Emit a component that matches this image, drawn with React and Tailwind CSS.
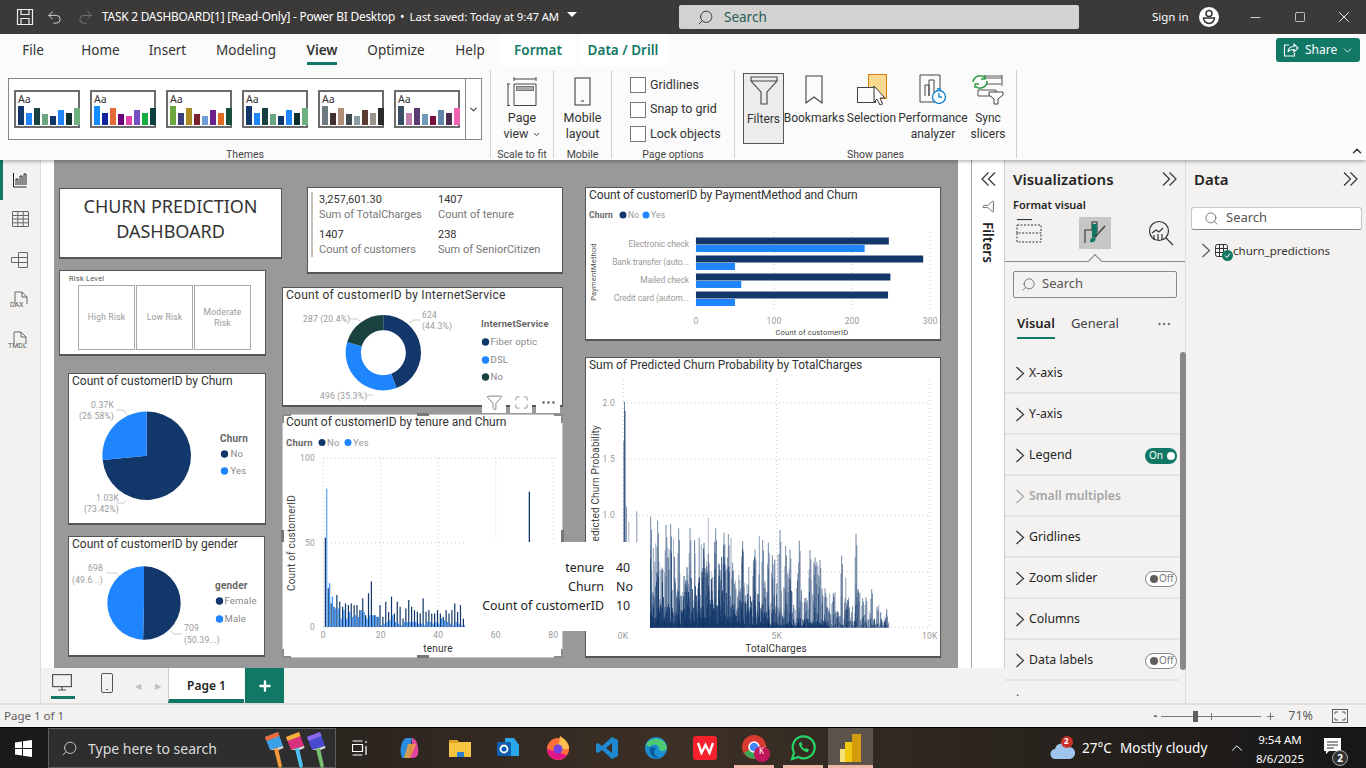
import { Search, ChevronDown, ChevronUp, Undo2, Redo2, Minus, Square, X, Filter, Maximize, MoreHorizontal, Plus } from 'lucide-react';

const ui = "font-['Noto_Sans',sans-serif]";
const din = "font-['Roboto',sans-serif]";

const DARK = '#12376a';
const BLUE = '#1f85ff';
const TEAL = '#1a4241';

const THEMES = [
    ['#12376a', '#1f85ff', '#1a4241', '#6aa67f', '#12376a', '#1f85ff', '#0f2f2f', '#6fb080'],
    ['#118dff', '#12239e', '#e66c37', '#6b007b', '#e044a7', '#744ec2', '#1aab40', '#0d3f3f'],
    ['#6da53f', '#3b3f7e', '#a98a23', '#7c1f2f', '#6ea0d6', '#6b1f8a', '#e06a1f', '#17503f'],
    ['#12376a', '#1f85ff', '#1a4241', '#6aa67f', '#12376a', '#1f85ff', '#0f2f2f', '#6fb080'],
    ['#6d7a80', '#40312e', '#b08d77', '#3f4a50', '#8a9da5', '#5a3a30', '#9b948c', '#2a2a2a'],
    ['#3a4f63', '#c27fae', '#5a3a72', '#6f9bb8', '#7a0f3f', '#5f86a8', '#4a2a4f', '#f062b0'],
];
const THEME_H = [19, 12, 17, 11, 9, 15, 12, 17];

const TABS = [
    ['File', 'w-[66px]'], ['Home', 'w-[69px]'], ['Insert', 'w-[65px]'], ['Modeling', 'w-[92px]'],
    ['View', 'w-[60px]'], ['Optimize', 'w-[88px]'], ['Help', 'w-[60px]'],
];

const PANE_ROWS = [
    { name: 'X-axis' }, { name: 'Y-axis' }, { name: 'Legend', toggle: 'on' }, { name: 'Small multiples', off: true },
    { name: 'Gridlines' }, { name: 'Zoom slider', toggle: 'off' }, { name: 'Columns' }, { name: 'Data labels', toggle: 'off' },
];

const TENURE_NO = [53, 23, 14, 12, 19, 15, 12, 14, 13, 14, 13, 13, 10, 17, 7, 20, 27, 7, 6, 13, 6, 15, 9, 18, 8, 15, 12, 5, 11, 16, 12, 10, 9, 8, 17, 9, 10, 8, 8, 10, 8, 6, 10, 8, 10, 14, 9, 13, 5, 3];
const TENURE_YES = [82, 26, 18, 11, 11, 5, 10, 5, 9, 6, 7, 6, 10, 9, 5, 7, 7, 7, 6, 1, 2, 3, 4, 7, 3, 2, 1, 3, 3, 3, 3, 3, 2, 2, 1, 3, 3, 2, 3, 2, 5, 4, 3, 2, 1, 3, 2, 1, 1, 2];

const PAY = [
    ['Electronic check', 247, 216], ['Bank transfer (auto...', 291, 50],
    ['Mailed check', 249, 58], ['Credit card (autom...', 246, 50],
];

// tops read off the reference, zoomed crop coordinates
const PEAKS = [[212, 380], [233, 392], [258, 405], [272, 402], [296, 415], [330, 415], [370, 475], [385, 492], [407, 415], [432, 428], [445, 432], [458, 518], [488, 453], [525, 478], [548, 450], [565, 458], [577, 495], [600, 420], [617, 468], [630, 478], [658, 452], [690, 480], [705, 502], [720, 510], [735, 595], [760, 610], [785, 497], [800, 640], [828, 432], [848, 625], [858, 622], [875, 597], [882, 690], [915, 690]];

function seeded(a) {
    return () => {
        a = (a + 0x6d2b79f5) | 0;
        let t = Math.imul(a ^ (a >>> 15), 1 | a);
        t = (t + Math.imul(t ^ (t >>> 7), 61 | t)) ^ t;
        return ((t ^ (t >>> 14)) >>> 0) / 4294967296;
    };
}

function makeSpikes() {
    const r = seeded(7);
    const out = [];
    let cluster = 1;
    for (let x = 626; x < 889; x += 0.35) {
        if (Math.floor(x) % 3 === 0) cluster = 0.45 + r() * 0.55;
        let env = x < 650 ? 110 : x < 760 ? 100 : x < 830 ? 72 : 50;
        if (x > 860) env = 22;
        out.push([x, 627 - Math.pow(r(), 2.1) * env * 1.15 * cluster, 0.3 + r() * 0.5]);
    }
    // dark mass near the baseline, thins out to the right
    for (let x = 650; x < 830; x += 0.5) {
        const env = x < 730 ? 70 : x < 770 ? 34 : 12;
        out.push([x, 627 - r() * r() * env, 0.9]);
    }
    PEAKS.forEach(([zx, zy]) => {
        const x = 580 + zx / 3;
        const top = 390 + zy / 3;
        out.push([x, top, 0.65], [x + 0.8, top + (627 - top) * 0.12, 0.6], [x - 0.8, top + (627 - top) * 0.25, 0.5]);
    });
    out.push([624.5, 402, 0.7], [625, 411, 0.95], [623.8, 441, 0.6]);
    return out;
}
const SPIKES = makeSpikes();

function slice(cx, cy, r0, r1, from, to) {
    const p = (r, a) => {
        const t = (a * Math.PI) / 180;
        return `${cx + r * Math.sin(t)} ${cy - r * Math.cos(t)}`;
    };
    const big = to - from > 180 ? 1 : 0;
    if (r0 === 0) return `M${cx} ${cy}L${p(r1, from)}A${r1} ${r1} 0 ${big} 1 ${p(r1, to)}Z`;
    return `M${p(r1, from)}A${r1} ${r1} 0 ${big} 1 ${p(r1, to)}L${p(r0, to)}A${r0} ${r0} 0 ${big} 0 ${p(r0, from)}Z`;
}

function Chev({ className = 'text-[#333]' }) {
    return (
        <svg width="10" height="15" viewBox="0 0 10 15" fill="none" stroke="currentColor" strokeWidth="1.2" className={className}>
            <path d="M1.500 1l7 6.500-7 6.500" />
        </svg>
    );
}

function DoubleChev({ left }) {
    return (
        <svg width="15" height="14" viewBox="0 0 15 14" fill="none" stroke="#333" strokeWidth="1.200" className={left ? '-scale-x-100' : ''}>
            <path d="M1 .500l6.500 6.500L1 13.500M7.500 .500L14 7l-6.500 6.500" />
        </svg>
    );
}

function Visual({ pos, title, children, extra = 'border border-[#555] border-b-2', track = '' }) {
    return (
        <div className={`absolute bg-white ${pos} ${extra}`}>
            {title && <div className={`absolute left-[3px] top-0 text-[12px] leading-[15px] text-[#333] whitespace-nowrap ${track} ${din}`}>{title}</div>}
            {children}
        </div>
    );
}

// viewBox is in screen pixels so the chart numbers can be read straight off the picture
function ChartSvg({ x, y, w, h, flush, children }) {
    return (
        <svg viewBox={`${x} ${y} ${w} ${h}`} width={w} height={h} className={flush ? 'absolute left-0 top-0' : 'absolute left-[-1px] top-[-1px]'}>
            {children}
        </svg>
    );
}

function ChartText({ x, y, children, anchor = 'start', size = 8.5, fill = '#999', weight = 400, rotate, ls = 0.2 }) {
    return (
        <text
            x={x}
            y={y}
            textAnchor={anchor}
            fontSize={size}
            fill={fill}
            fontWeight={weight}
            fontFamily="Roboto, sans-serif"
            letterSpacing={ls}
            transform={rotate ? `rotate(-90 ${x} ${y})` : undefined}
        >
            {children}
        </text>
    );
}

function Legend({ title, x, y, items, dx = 5, size = 10 }) {
    return (
        <g>
            <ChartText x={x} y={y + 3} size={size} weight={700} fill="#666">{title}</ChartText>
            {items.map(([name, color, iy]) => (
                <g key={name}>
                    <circle cx={x + 4.5} cy={iy} r="3.7" fill={color} />
                    <ChartText x={x + 4.5 + dx} y={iy + 3} size={9.5} fill="#888">{name}</ChartText>
                </g>
            ))}
        </g>
    );
}

function TitleBar() {
    return (
        <div className={`h-[34px] bg-[#3b3a39] flex items-center text-white shrink-0 ${ui}`}>
            <svg width="18" height="18" viewBox="0 0 18 18" fill="none" stroke="#eee" strokeWidth="1.2" className="ml-[16px]">
                <path d="M1.500 1.500h15v15h-15zM5 1.500v5h8v-5M5 16.500v-6h8v6" />
            </svg>
            <Undo2 size={17} strokeWidth={1.3} className="ml-[12px] text-[#ddd]" />
            <Redo2 size={17} strokeWidth={1.3} className="ml-[14px] text-[#777]" />
            <div className="ml-[8px] w-[465px] text-[11.9px] whitespace-nowrap">
                <span className="tracking-[-0.23px]">TASK 2 DASHBOARD[1] [Read-Only] - Power BI Desktop</span>
                <span className="mx-[5px]">•</span>
                <span className="text-[11.3px] tracking-[-0.09px]">Last saved: Today at 9:47 AM</span>
            </div>
            <div className="w-0 h-0 border-x-[5px] border-x-transparent border-t-[5px] border-t-white mb-[5px]" />
            <div className="ml-[102px] w-[400px] h-[24px] bg-[#d2d2d0] rounded-[2px] flex items-center pl-[18px] text-[13.5px] text-[#2a5a55]">
                <Search size={17} strokeWidth={1.3} className="text-[#333] -scale-x-100" />
                <span className="ml-[10px]">Search</span>
            </div>
            <span className="ml-[73px] w-[37px] text-[11.5px] whitespace-nowrap">Sign in</span>
            <svg width="20" height="20" viewBox="0 0 20 20" className="ml-[10px]">
                <circle cx="10" cy="10" r="10" fill="#fff" />
                <circle cx="10" cy="6.500" r="3" fill="none" stroke="#333" strokeWidth="1.500" />
                <path d="M4.500 11h11a5.500 5.500 0 0 1-11 0z" fill="none" stroke="#333" strokeWidth="1.500" />
            </svg>
            <Minus size={15} strokeWidth={1.2} className="ml-[29px]" />
            <Square size={12} strokeWidth={1.3} className="ml-[31px]" />
            <X size={18} strokeWidth={1.2} className="ml-[29px]" />
        </div>
    );
}

function ThemeThumb({ colors }) {
    return (
        <div className="w-[66px] h-[38px] border-2 border-[#6b6b6b] bg-white relative shrink-0">
            <span className={`absolute left-[2px] top-[0px] text-[10.5px] leading-[14px] text-[#333] ${ui}`}>Aa</span>
            <div className="absolute left-[2px] bottom-[1px] flex items-end gap-[2px]">
                {colors.map((c, i) => (
                    <div key={i} className="w-[6px]" style={{ background: c, height: THEME_H[i] }} />
                ))}
            </div>
        </div>
    );
}

function RibbonGroup({ width, label, children }) {
    return (
        <div className={`${width} h-[88px] mt-[2px] border-r border-[#d0d0d0] flex flex-col shrink-0`}>
            <div className="h-[78px] flex shrink-0">{children}</div>
            <div className={`text-center text-[10.5px] leading-[14px] text-[#444] ${din}`}>{label}</div>
        </div>
    );
}

function PaneBtn({ width, lines, children, active }) {
    return (
        <div className={`${width} h-[71px] mt-[3px] flex flex-col items-center shrink-0 ${active ? 'bg-[#ececec] border border-[#555]' : ''}`}>
            <div className="h-[31px] mt-[1px] flex items-center justify-center">{children}</div>
            <div className={`text-[12px] leading-[16px] text-[#333] text-center mt-[5px] whitespace-nowrap ${din}`}>
                {lines.map((l) => <div key={l}>{l}</div>)}
            </div>
        </div>
    );
}

function CheckRow({ label }) {
    return (
        <div className="flex items-center h-[24.5px]">
            <div className="w-[16px] h-[16px] border border-[#777] bg-white" />
            <span className={`ml-[4px] text-[12.5px] text-[#333] ${din}`}>{label}</span>
        </div>
    );
}

function Ribbon() {
    return (
        <div className={`h-[126px] bg-[#fbfbfb] shrink-0 relative shadow-[0_2px_3px_rgba(0,0,0,0.25)] z-10 ${ui}`}>
            <div className="h-[34px] flex items-stretch text-[13.5px] text-[#333] relative">
                {TABS.map(([t, w]) => (
                    <div key={t} className={`${w} relative flex items-center justify-center pb-[2px] ${t === 'View' ? 'font-semibold' : ''}`}>
                        {t}
                        {t === 'View' && <div className="absolute bottom-[3px] left-[15px] w-[30px] h-[3px] bg-[#117865]" />}
                    </div>
                ))}
                <div className="w-[76px] h-[32px] bg-white flex items-center justify-center text-[#117865] font-semibold">Format</div>
                <div className="ml-[3px] w-[88px] h-[32px] bg-white flex items-center justify-center text-[#117865] font-semibold">Data / Drill</div>
                <div className="absolute left-[1276px] top-[4px] w-[84px] h-[24px] bg-[#117865] rounded-[3px] flex items-center text-white text-[12px] pl-[7px]">
                    <svg width="16" height="16" viewBox="0 0 16 16" fill="none" stroke="#fff" strokeWidth="1.100">
                        <path d="M6 3H1.500v11h10v-3M5 10c0-4 3-5.500 6-5.500V2l4 4-4 4V7.500C8 7.500 6 8 5 10z" />
                    </svg>
                    <span className="ml-[6px]">Share</span>
                    <ChevronDown size={13} strokeWidth={1.500} className="ml-[4px]" />
                </div>
            </div>
            <div className="flex h-[92px]">
                <RibbonGroup width="w-[491px]" label="Themes">
                    <div className="ml-[8px] mt-[8px] w-[474px] h-[62px] border border-[#888] flex bg-white">
                        <div className="flex-1 flex gap-[10px] pl-[5px] pt-[11px]">
                            {THEMES.map((c, i) => <ThemeThumb key={i} colors={c} />)}
                        </div>
                        <div className="w-[16px] border-l border-[#888] flex items-center justify-center">
                            <ChevronDown size={11} strokeWidth={2.500} className="text-[#444]" />
                        </div>
                    </div>
                </RibbonGroup>
                <RibbonGroup width="w-[63px]" label="Scale to fit">
                    <div className="w-full flex flex-col items-center">
                        <svg width="30" height="30" viewBox="0 0 30 30" fill="none" stroke="#444" strokeWidth="1" className="mt-[6px]">
                            <path d="M7 1v4M29 1v4M7 3h22M1 8v22M0 8h3M0 29.500h3M7 8h22v21.500H7z" />
                            <rect x="9.500" y="10.500" width="17" height="4" fill="#aaa" stroke="#777" />
                        </svg>
                        <div className={`text-[12.5px] leading-[16px] text-[#333] text-center mt-[4px] ${din}`}>
                            Page<br />view <ChevronDown size={9} strokeWidth={2.500} className="inline -mt-[1px]" />
                        </div>
                    </div>
                </RibbonGroup>
                <RibbonGroup width="w-[58px]" label="Mobile">
                    <div className="w-full flex flex-col items-center">
                        <svg width="18" height="29" viewBox="0 0 18 29" fill="none" stroke="#444" strokeWidth="1.100" className="mt-[7px]">
                            <rect x="1" y="1" width="15" height="27" />
                            <path d="M7 24h3" />
                        </svg>
                        <div className={`text-[12.5px] leading-[16px] text-[#333] text-center mt-[4px] ${din}`}>Mobile<br />layout</div>
                    </div>
                </RibbonGroup>
                <RibbonGroup width="w-[123px]" label="Page options">
                    <div className="ml-[18px] mt-[3px]">
                        <CheckRow label="Gridlines" />
                        <CheckRow label="Snap to grid" />
                        <CheckRow label="Lock objects" />
                    </div>
                </RibbonGroup>
                <RibbonGroup width="w-[282px]" label="Show panes">
                    <div className="flex pl-[8px]">
                        <PaneBtn width="w-[41px]" lines={['Filters']} active>
                            <svg width="28" height="29" viewBox="0 0 28 29" fill="none" stroke="#444" strokeWidth="1.100">
                                <path d="M1 1h26v4L17 16v12h-6V16L1 5zM1 5h26" />
                            </svg>
                        </PaneBtn>
                        <PaneBtn width="w-[60px]" lines={['Bookmarks']}>
                            <svg width="18" height="29" viewBox="0 0 18 29" fill="none" stroke="#444" strokeWidth="1.100">
                                <path d="M1 1h16v27l-8-6-8 6z" />
                            </svg>
                        </PaneBtn>
                        <PaneBtn width="w-[55px]" lines={['Selection']}>
                            <svg width="30" height="31" viewBox="0 0 30 31" fill="none">
                                <rect x="11.500" y="0.500" width="18" height="24" fill="#fbd98e" stroke="#d97c10" />
                                <rect x="0.500" y="13.500" width="18" height="15" fill="#fbfbfb" stroke="#444" />
                                <path d="M17 12l11 12h-5l2.500 6-2.500 1-3-6-3 3z" fill="#fff" stroke="#333" />
                            </svg>
                        </PaneBtn>
                        <PaneBtn width="w-[68px]" lines={['Performance', 'analyzer']}>
                            <svg width="28" height="31" viewBox="0 0 28 31" fill="none" stroke="#444" strokeWidth="1">
                                <path d="M1 1h20v27H1zM6 22V11h4v11M10 22V6h5v16" />
                                <circle cx="20" cy="23" r="6.500" fill="#fff" stroke="#1a86d0" strokeWidth="1.400" />
                                <path d="M20 19v4h3M18 14.800h4" stroke="#1a86d0" strokeWidth="1.400" />
                            </svg>
                        </PaneBtn>
                        <PaneBtn width="w-[42px]" lines={['Sync', 'slicers']}>
                            <svg width="32" height="31" viewBox="0 0 32 31" fill="none">
                                <rect x="12" y="1" width="18" height="4" fill="#aaa" />
                                <path d="M30 1v11M14 10h15M6 16h18v6H6z" stroke="#555" />
                                <path d="M1 8a7 7 0 0 1 12-4M15 7a7 7 0 0 1-12 5" stroke="#2e9b47" strokeWidth="1.600" />
                                <path d="M13 1v4h-4M3 14v-4h4" stroke="#2e9b47" strokeWidth="1.300" />
                                <path d="M17 18h14v3l-5 4v5h-4v-5l-5-4z" fill="#fff" stroke="#444" />
                            </svg>
                        </PaneBtn>
                    </div>
                </RibbonGroup>
                <ChevronUp size={14} strokeWidth={2.500} className="absolute right-[2px] bottom-[2px] text-[#333]" />
            </div>
        </div>
    );
}

function Rail() {
    return (
        <div className="w-[41px] bg-[#f3f2f1] border-r border-[#ddd] relative flex flex-col items-center pt-[12px] shrink-0">
            <div className="absolute left-0 top-0 w-[3px] h-[40px] bg-[#117865]" />
            <svg width="14" height="16" viewBox="0 0 14 16" fill="none" stroke="#222">
                <path d="M.5 1v14h13M3 13V7h2v6M7 13V4h2v9M11 13V2h2v11" />
            </svg>
            <svg width="17" height="16" viewBox="0 0 17 16" fill="none" stroke="#666" className="mt-[23px]">
                <path d="M.5.500h16v15H.500zM.5 4.500h16M.5 8h16M.5 11.800h16M5.800.5v15M11.200.5v15" />
            </svg>
            <svg width="18" height="18" viewBox="0 0 18 18" fill="none" stroke="#666" className="mt-[24px]">
                <path d="M7.500 1.500h9v5h-9zM.5 6.500h7v5h-7zM7.500 11.500h9v5h-9zM7.500 6.500h9v5h-9" />
            </svg>
            <div className="relative w-[20px] h-[22px] mt-[22px]">
                <svg width="14" height="14" viewBox="0 0 14 14" fill="none" stroke="#666" className="absolute left-[4px] top-0">
                    <path d="M1 13V1h7l5 5v7M8 1v5h5" />
                </svg>
                <span className={`absolute left-[0px] top-[10px] text-[7px] leading-[9px] text-[#555] ${din}`}>DAX</span>
            </div>
            <div className="relative w-[20px] h-[22px] mt-[18px]">
                <svg width="14" height="14" viewBox="0 0 14 14" fill="none" stroke="#666" className="absolute left-[3px] top-0">
                    <path d="M1 13V1h7l5 5v7M8 1v5h5" />
                </svg>
                <span className={`absolute left-[-2px] top-[11px] text-[7px] leading-[9px] text-[#555] ${din}`}>TMDL</span>
            </div>
        </div>
    );
}

function ChurnPie() {
    const cx = 146.7, cy = 455.7, r = 44.3;
    const a = 360 - 26.58 * 3.6;
    return (
        <ChartSvg x={68} y={373} w={198} h={152}>
            <path d={slice(cx, cy, 0, r, 0, a)} fill={DARK} />
            <path d={slice(cx, cy, 0, r, a, 360)} fill={BLUE} />
            <ChartText x={114} y={408} anchor="end">0.37K</ChartText>
            <ChartText x={114} y={419} anchor="end">(26.58%)</ChartText>
            <path d="M116 410h8l3 5M116 503h8l3-3" fill="none" stroke="#ccc" />
            <ChartText x={119} y={501} anchor="end">1.03K</ChartText>
            <ChartText x={119} y={512} anchor="end">(73.42%)</ChartText>
            <Legend title="Churn" x={220} y={439} items={[['No', DARK, 454], ['Yes', BLUE, 471]]} dx={6} />
        </ChartSvg>
    );
}

function GenderPie() {
    const cx = 144, cy = 603, r = 36.7;
    return (
        <ChartSvg x={68} y={536} w={197} h={121}>
            <path d={slice(cx, cy, 0, r, 0, 181.4)} fill={DARK} />
            <path d={slice(cx, cy, 0, r, 181.4, 360)} fill={BLUE} />
            <ChartText x={103} y={571} anchor="end">698</ChartText>
            <ChartText x={103} y={583} anchor="end">(49.6...)</ChartText>
            <path d="M106 573h10l3 3M171 631l3 3h8" fill="none" stroke="#ccc" />
            <ChartText x={184} y={631}>709</ChartText>
            <ChartText x={184} y={643}>(50.39...)</ChartText>
            <Legend title="gender" x={215} y={586} items={[['Female', DARK, 601], ['Male', BLUE, 619]]} />
        </ChartSvg>
    );
}

function Donut() {
    const cx = 383.3, cy = 352.7;
    const a = 44.3 * 3.6, b = a + 35.3 * 3.6;
    return (
        <ChartSvg x={282} y={287} w={281} h={120}>
            <path d={slice(cx, cy, 22.5, 37.7, 0, a)} fill={DARK} />
            <path d={slice(cx, cy, 22.5, 37.7, a, b)} fill={BLUE} />
            <path d={slice(cx, cy, 22.5, 37.7, b, 360)} fill={TEAL} />
            <ChartText x={303} y={322}>287 (20.4%)</ChartText>
            <ChartText x={422} y={318}>624</ChartText>
            <ChartText x={422} y={329}>(44.3%)</ChartText>
            <ChartText x={320} y={399}>496 (35.3%)</ChartText>
            <path d="M349 319h8l4 3M420 320h-6l-5 3M365 395h8" fill="none" stroke="#ccc" />
            <Legend title="InternetService" x={481} y={324} size={9.4} items={[['Fiber optic', DARK, 342], ['DSL', BLUE, 360], ['No', TEAL, 377]]} />
        </ChartSvg>
    );
}

function PaymentChart() {
    const x0 = 696, k = 0.7807;
    return (
        <ChartSvg x={585} y={187} w={356} h={154}>
            {[0, 100, 200, 300].map((v) => (
                <g key={v}>
                    <line x1={x0 + v * k} x2={x0 + v * k} y1="232" y2="312" stroke="#ccc" strokeDasharray="1 3" />
                    <ChartText x={x0 + v * k} y={324} anchor="middle">{v}</ChartText>
                </g>
            ))}
            {PAY.map(([name, no, yes], i) => (
                <g key={name}>
                    <rect x={x0} y={237.5 + i * 18} width={no * k} height="7" fill={DARK} />
                    <rect x={x0} y={245 + i * 18} width={yes * k} height="7" fill={BLUE} />
                    <ChartText x={689} y={247 + i * 18} anchor="end" ls={-0.1}>{name}</ChartText>
                </g>
            ))}
            <ChartText x={596} y={272} anchor="middle" size={7.5} fill="#555" rotate>PaymentMethod</ChartText>
            <ChartText x={812} y={335} anchor="middle" size={7.5} fill="#444">Count of customerID</ChartText>
            <ChartText x={589} y={218} size={8.5} weight={700} fill="#666">Churn</ChartText>
            <circle cx="623" cy="215" r="3.500" fill={DARK} />
            <ChartText x={628} y={218} size={8.500}>No</ChartText>
            <circle cx="646" cy="215" r="3.500" fill={BLUE} />
            <ChartText x={651} y={218} size={8.500}>Yes</ChartText>
        </ChartSvg>
    );
}

function TenureChart() {
    const x0 = 323.3, k = 2.875, y0 = 627, h = 1.687;
    return (
        <ChartSvg x={283} y={415} w={279} h={242} flush>
            {[0, 20, 40, 60, 80].map((v) => (
                <g key={v}>
                    <line x1={x0 + v * k} x2={x0 + v * k} y1="458" y2="627" stroke="#ccc" strokeDasharray="1 3" />
                    <ChartText x={x0 + v * k} y={638} anchor="middle">{v}</ChartText>
                </g>
            ))}
            {[[100, 458.3], [50, 542.7], [0, 627]].map(([v, y]) => (
                <g key={v}>
                    <line x1="323" x2="556" y1={y} y2={y} stroke="#ccc" strokeDasharray="1 3" />
                    <ChartText x={315} y={y + 3} anchor="end">{v}</ChartText>
                </g>
            ))}
            {TENURE_NO.map((v, i) => <rect key={i} x={x0 + (i + 1) * k - 1.4} y={y0 - v * h} width="1.2" height={v * h} fill={DARK} />)}
            {TENURE_YES.map((v, i) => <rect key={i} x={x0 + (i + 1) * k - 0.2} y={y0 - v * h} width="1.4" height={v * h} fill={BLUE} fillOpacity={i === 0 ? 0.65 : 0.85} />)}
            <rect x="528.700" y="491.700" width="1.300" height="52" fill={DARK} />
            <ChartText x={295} y={543} anchor="middle" size={10} fill="#444" rotate>Count of customerID</ChartText>
            <ChartText x={438} y={652} anchor="middle" size={10} fill="#333">tenure</ChartText>
            <ChartText x={286} y={446} size={9.5} weight={700} fill="#666">Churn</ChartText>
            <circle cx="322" cy="442.500" r="3.500" fill={DARK} />
            <ChartText x={327} y={446} size={9.500}>No</ChartText>
            <circle cx="348" cy="442.500" r="3.500" fill={BLUE} />
            <ChartText x={353} y={446} size={9.500}>Yes</ChartText>
        </ChartSvg>
    );
}

function SumChart() {
    return (
        <ChartSvg x={585} y={357} w={356} h={301}>
            {[623.3, 776.7, 929.7].map((x) => <line key={x} x1={x} x2={x} y1="380" y2="628" stroke="#ccc" strokeDasharray="1 3" />)}
            {[['2.0', 402.7], ['1.5', 459], ['1.0', 515.3], ['0.5', 571.7], ['', 627.3]].map(([t, y]) => (
                <g key={y}>
                    <line x1="623" x2="930" y1={y} y2={y} stroke="#ccc" strokeDasharray="1 3" />
                    <ChartText x={615} y={y + 3} anchor="end">{t}</ChartText>
                </g>
            ))}
            {SPIKES.map(([x, top, o], i) => <line key={i} x1={x} x2={x} y1={top} y2="627.500" stroke={DARK} strokeOpacity={o} strokeWidth="0.9" />)}
            <ChartText x={623} y={639} anchor="middle">0K</ChartText>
            <ChartText x={776.700} y={639} anchor="middle">5K</ChartText>
            <ChartText x={929.700} y={639} anchor="middle">10K</ChartText>
            <ChartText x={599} y={425} anchor="end" size={10} fill="#444" rotate>Sum of Predicted Churn Probability</ChartText>
            <ChartText x={776} y={652} anchor="middle" size={10} fill="#333">TotalCharges</ChartText>
        </ChartSvg>
    );
}

function Stat({ value, label }) {
    return (
        <div>
            <div className="text-[11px] leading-[15px] text-[#333]">{value}</div>
            <div className="text-[11px] leading-[15px] text-[#777] whitespace-nowrap">{label}</div>
        </div>
    );
}

function RiskBtn({ children }) {
    return <div className={`w-[57px] h-[65px] border border-[#aaa] flex items-center justify-center text-center text-[8.5px] leading-[11px] text-[#999] tracking-[0.2px] ${din}`}>{children}</div>;
}

function Corner({ className }) {
    return <div className={`absolute w-[9px] h-[9px] border-[#8c8c8c] z-20 ${className}`} />;
}

function Canvas() {
    return (
        <div className="w-[904px] h-full bg-[#999999] relative overflow-hidden shrink-0">
            <Visual pos="left-[5px] top-[28px] w-[223px] h-[71px]">
                <div className={`h-full flex items-center justify-center text-center text-[18px] leading-[25px] pb-[8px] text-[#333] ${ui}`}>CHURN PREDICTION<br />DASHBOARD</div>
            </Visual>
            <Visual pos="left-[5px] top-[110px] w-[207px] h-[86px]">
                <div className={`absolute left-[9px] top-[3px] text-[7.5px] leading-[10px] text-[#555] tracking-[0.2px] ${din}`}>Risk Level</div>
                <div className="absolute left-[18px] top-[14px] flex gap-[1px]">
                    <RiskBtn>High Risk</RiskBtn>
                    <RiskBtn>Low Risk</RiskBtn>
                    <RiskBtn>Moderate<br />Risk</RiskBtn>
                </div>
            </Visual>
            <Visual pos="left-[14px] top-[213px] w-[198px] h-[152px]" title="Count of customerID by Churn"><ChurnPie /></Visual>
            <Visual pos="left-[14px] top-[376px] w-[197px] h-[121px]" title="Count of customerID by gender"><GenderPie /></Visual>
            <Visual pos="left-[253px] top-[27px] w-[256px] h-[87px]">
                <div className="absolute left-[3px] top-[4px] w-[2px] h-[65px] bg-[#c8c1b8]" />
                <div className={`absolute left-[11px] top-[4px] grid grid-cols-[119px_119px] gap-y-[5px] ${din}`}>
                    <Stat value="3,257,601.30" label="Sum of TotalCharges" />
                    <Stat value="1407" label="Count of tenure" />
                    <Stat value="1407" label="Count of customers" />
                    <Stat value="238" label="Sum of SeniorCitizen" />
                </div>
            </Visual>
            <Visual pos="left-[228px] top-[127px] w-[281px] h-[120px]" title="Count of customerID by InternetService" track="tracking-[0.28px]"><Donut /></Visual>
            <Visual pos="left-[531px] top-[27px] w-[356px] h-[154px]" title="Count of customerID by PaymentMethod and Churn" track="tracking-[-0.13px]"><PaymentChart /></Visual>
            <Visual pos="left-[531px] top-[197px] w-[356px] h-[301px]" title="Sum of Predicted Churn Probability by TotalCharges" track="tracking-[-0.05px]"><SumChart /></Visual>

            <div className="absolute left-[228px] top-[254px] w-[281px] h-[244px] bg-[#c4c4c4] z-10" />
            <Visual pos="left-[229px] top-[255px] w-[279px] h-[242px] z-10" extra="" title="Count of customerID by tenure and Churn"><TenureChart /></Visual>
            <Corner className="left-[228px] top-[254px] border-l-2 border-t-2" />
            <Corner className="left-[500px] top-[254px] border-r-2 border-t-2" />
            <Corner className="left-[228px] top-[489px] border-l-2 border-b-2" />
            <Corner className="left-[500px] top-[489px] border-r-2 border-b-2" />
            <div className="absolute left-[363px] top-[253px] w-[12px] h-[3px] bg-[#777] z-20" />
            <div className="absolute left-[363px] top-[495px] w-[12px] h-[3px] bg-[#777] z-20" />
            <div className="absolute left-[227px] top-[370px] w-[3px] h-[12px] bg-[#777] z-20" />
            <div className="absolute left-[507px] top-[370px] w-[3px] h-[12px] bg-[#777] z-20" />

            <div className="absolute left-[428px] top-[232px] flex gap-[4px] z-20 text-[#555]">
                <div className="w-[24px] h-[21px] bg-white flex items-center justify-center"><Filter size={17} strokeWidth={1} /></div>
                <div className="w-[22px] h-[21px] bg-white flex items-center justify-center"><Maximize size={15} strokeWidth={1} /></div>
                <div className="w-[24px] h-[21px] bg-white flex items-center justify-center"><MoreHorizontal size={17} strokeWidth={1.500} /></div>
            </div>

            <div className={`absolute left-[411px] top-[382px] w-[185px] h-[89px] bg-white z-30 pl-[17px] pt-[16px] text-[12.4px] leading-[19px] text-[#222] grid grid-cols-[122px_1fr] gap-x-[12px] content-start ${ui}`}>
                <span className="text-right">tenure</span><span>40</span>
                <span className="text-right">Churn</span><span>No</span>
                <span className="text-right whitespace-nowrap">Count of customerID</span><span>10</span>
            </div>
        </div>
    );
}

function FiltersPane() {
    return (
        <div className="w-[33px] bg-white border-r border-[#ccc] flex flex-col items-center shrink-0">
            <div className="mt-[12px]"><DoubleChev left /></div>
            <Filter size={13} strokeWidth={1.300} className="mt-[14px] text-[#333] rotate-90" />
            <div className="mt-[9px] text-[13.5px] font-semibold text-[#222] [writing-mode:vertical-rl]">Filters</div>
        </div>
    );
}

function Toggle({ on }) {
    if (on) {
        return (
            <div className="w-[32px] h-[16px] rounded-full bg-[#117865] flex items-center justify-between pl-[4px] pr-[2px] text-[10px] text-white">
                On<div className="w-[8px] h-[8px] rounded-full bg-white" />
            </div>
        );
    }
    return (
        <div className="w-[32px] h-[16px] rounded-full border border-[#888] bg-white flex items-center pl-[4px] text-[10px] text-[#777]">
            <div className="w-[8px] h-[8px] rounded-full bg-[#605e5c] mr-[1px]" />Off
        </div>
    );
}

function VizPane() {
    return (
        <div className="w-[181px] h-full bg-[#f3f2f1] border-r border-[#ddd] relative shrink-0">
            <div className="flex items-center justify-between pl-[8px] pr-[8px] pt-[8px]">
                <span className="text-[15px] font-semibold text-[#252423]">Visualizations</span>
                <DoubleChev />
            </div>
            <div className="pl-[8px] mt-[6px] text-[11px] leading-[16px] font-semibold text-[#252423]">Format visual</div>
            <div className="h-[45px] mt-[4px] flex border-b border-[#8a8886] relative">
                <svg width="26" height="25" viewBox="0 0 26 25" fill="none" stroke="#333" className="ml-[11px] mt-[2px]">
                    <path d="M1 .500h15" strokeWidth="1.200" />
                    <path d="M1 6h24v8H1zM1 14v9h24v-9" strokeDasharray="2 1.500" />
                </svg>
                <div className="absolute left-[74px] top-0 w-[32px] h-[32px] bg-[#c8c6c4] flex items-center justify-center">
                    <svg width="24" height="24" viewBox="0 0 24 24" fill="none">
                        <path d="M2 22V9h7V1h5v10" stroke="#333" strokeWidth="1.100" />
                        <rect x="9" y="3" width="5" height="13" fill="#117865" />
                        <path d="M22 5L11 17" stroke="#444" strokeWidth="1.600" />
                        <path d="M7 21c0-4 3-6 5-4s-1 5-5 4z" fill="#117865" />
                    </svg>
                </div>
                <svg width="26" height="26" viewBox="0 0 26 26" fill="none" stroke="#333" strokeWidth="1.200" className="absolute left-[143px] top-[3px]">
                    <circle cx="11" cy="11" r="9.500" />
                    <path d="M18 18l7 7M4 13l4-3 3 2 4-4M6 20v-5M10 20v-6M14 20v-6" />
                </svg>
                <div className="absolute left-[85px] top-[39px] w-[10px] h-[10px] rotate-45 bg-[#f3f2f1] border-l border-t border-[#8a8886]" />
            </div>
            <div className="ml-[8px] mt-[9px] w-[164px] h-[27px] border border-[#8a8886] rounded-[2px] flex items-center pl-[7px] text-[13px] text-[#555]">
                <Search size={15} strokeWidth={1.200} className="-scale-x-100" />
                <span className="ml-[6px]">Search</span>
            </div>
            <div className="h-[24px] mt-[16px] ml-[12px] flex text-[13px] text-[#444] relative">
                <span className="font-semibold text-[#252423]">Visual</span>
                <span className="ml-[16px]">General</span>
                <MoreHorizontal size={16} strokeWidth={1.300} className="ml-[37px] mt-[2px]" />
                <div className="absolute left-0 top-[23px] w-[38px] h-[2px] bg-[#117865]" />
            </div>
            <div className="absolute left-[0px] top-[193px] w-[174px]">
                {PANE_ROWS.map((r) => (
                    <div key={r.name} className={`h-[41px] border-b-2 border-[#e6e4e2] flex items-center pl-[10px] pt-[2px] text-[12.3px] ${r.off ? 'text-[#a6a6a6] font-semibold' : 'text-[#252423]'}`}>
                        <Chev className={r.off ? 'text-[#a6a6a6]' : 'text-[#333]'} />
                        <span className="ml-[4px]">{r.name}</span>
                        {r.toggle && <div className="ml-auto mr-[2px]"><Toggle on={r.toggle === 'on'} /></div>}
                    </div>
                ))}
                <div className="pl-[11px] text-[12px] text-[#555] leading-[18px] mt-[2px]">.</div>
            </div>
            <div className="absolute left-[175px] top-[192px] w-[6px] h-[318px] rounded-full bg-[#8a8886]" />
        </div>
    );
}

function DataPane() {
    return (
        <div className="flex-1 h-full bg-[#f3f2f1] relative">
            <div className="flex items-center justify-between pl-[8px] pr-[8px] pt-[8px]">
                <span className="text-[15px] font-semibold text-[#252423]">Data</span>
                <DoubleChev />
            </div>
            <div className="ml-[5px] mt-[16px] w-[171px] h-[23px] bg-white border border-[#c8c6c4] border-b-[#8a8886] rounded-[3px] flex items-center pl-[12px] text-[13px] text-[#555]">
                <Search size={15} strokeWidth={1.200} />
                <span className="ml-[7px]">Search</span>
            </div>
            <div className="flex items-center mt-[12px] ml-[15px] relative">
                <Chev className="text-[#555] mr-[3px]" />
                <svg width="13" height="13" viewBox="0 0 13 13" fill="none" stroke="#333" className="ml-[1px]">
                    <rect x="0.500" y="0.500" width="12" height="12" rx="2" />
                    <path d="M.5 4.500h12M.5 8.500h12M4.500.5v12M8.500.5v12" />
                </svg>
                <span className="ml-[5px] text-[11.5px] text-[#333]">churn_predictions</span>
                <div className="absolute left-[21px] top-[8px] w-[11px] h-[11px] rounded-full bg-[#117865] flex items-center justify-center">
                    <svg width="7" height="7" viewBox="0 0 7 7" fill="none" stroke="#fff"><path d="M1 3.500l2 2 3-4" /></svg>
                </div>
            </div>
        </div>
    );
}

function TabStrip() {
    return (
        <div className={`h-[35px] bg-[#f3f2f1] flex shrink-0 ${ui}`}>
            <div className="w-[41px] border-r border-[#ddd]" />
            <div className="w-[34px] relative flex justify-center pt-[6px] ml-[4px]">
                <svg width="20" height="17" viewBox="0 0 20 17" fill="none" stroke="#555" strokeWidth="1.200">
                    <rect x="0.600" y="0.600" width="18.800" height="12" /><path d="M10 13v3M6 16h8" />
                </svg>
                <div className="absolute left-[6px] bottom-[4px] w-[24px] h-[3px] bg-[#117865]" />
            </div>
            <div className="w-[42px] flex justify-center pt-[5px] ml-[7px]">
                <svg width="12" height="20" viewBox="0 0 12 20" fill="none" stroke="#555"><rect x="0.500" y="0.500" width="11" height="19" rx="1.500" /><path d="M5 16.500h2" /></svg>
            </div>
            <div className="w-[40px] flex justify-center items-center gap-[14px] text-[#c0c0c0] text-[8px]">
                <span>◀</span><span>▶</span>
            </div>
            <div className="w-[76px] bg-white border-l border-[#ccc] border-b-[4px] border-b-[#117865] flex items-center justify-center pt-[5px] text-[12px] font-semibold text-[#252423]">Page 1</div>
            <div className="w-[39px] ml-[1px] bg-[#117865] flex items-center justify-center text-white"><Plus size={16} strokeWidth={3.500} /></div>
        </div>
    );
}

function StatusBar() {
    return (
        <div className={`h-[24px] bg-[#f3f2f1] border-t-2 border-[#e1dfdd] flex items-center text-[11.5px] text-[#605e5c] shrink-0 relative ${ui}`}>
            <span className="ml-[4px]">Page 1 of 1</span>
            <span className="ml-auto mr-[4px] font-bold">-</span>
            <div className="w-[100px] h-[1px] bg-[#777] relative">
                <div className="absolute left-[32px] top-[-5px] w-[5px] h-[11px] bg-[#605e5c]" />
                <div className="absolute left-[50px] top-[-3px] w-[1px] h-[7px] bg-[#777]" />
            </div>
            <Plus size={11} strokeWidth={1.800} className="ml-[4px]" />
            <span className="ml-[12px] text-[12.5px]">71%</span>
            <svg width="16" height="14" viewBox="0 0 16 14" fill="none" stroke="#605e5c" className="ml-[19px] mr-[18px]">
                <rect x="0.500" y="0.500" width="15" height="13" />
                <path d="M3 5V3h3M10 3h3v2M13 9v2h-3M6 11H3V9" />
            </svg>
        </div>
    );
}

function Brush({ top, head, handle }) {
    return (
        <svg width="21" height="39" viewBox="0 0 21 39">
            <path d="M1 7L14 2l5 14-13 4z" fill={head} />
            <path d="M1 7L14 2l1.500 4L2.500 11z" fill={top} />
            <path d="M6 20l13-4 0.500 2-5 2z" fill="#ddd" />
            <path d="M10 19l4-1 4 18-1.500 2-2-1z" fill={handle} />
        </svg>
    );
}

function Taskbar() {
    return (
        <div className={`h-[41px] bg-linear-to-r from-[#191919] via-[#3d3025] to-[#171717] border-t border-black flex items-center text-white shrink-0 relative ${ui}`}>
            <svg width="17" height="17" viewBox="0 0 17 17" fill="#fff" className="ml-[15px]">
                <path d="M0 2.500l7-1v6.500H0zM8 1.300L17 0v8H8zM0 9h7v6.500l-7-1zM8 9h9v8l-9-1.300z" />
            </svg>
            <div className="absolute left-[48px] top-0 w-[288px] h-[40px] bg-[#2e2e2e] border border-[#5e5e5e] flex items-center pl-[12px] text-[14px] text-[#dcdcdc]">
                <Search size={17} strokeWidth={1.200} className="-scale-x-100" />
                <span className="ml-[10px]">Type here to search</span>
                <div className="absolute left-[215px] top-[1px] flex">
                    <Brush top="#f0693a" head="#3aa0e8" handle="#f59a3a" />
                    <Brush top="#f0b03a" head="#d8307a" handle="#4cc0ee" />
                    <Brush top="#8a6ae8" head="#4a4ad0" handle="#78c070" />
                </div>
            </div>
            <svg width="16" height="16" viewBox="0 0 16 16" fill="none" stroke="#fff" className="absolute left-[352px] top-[12px]">
                <path d="M.5 1h10M.5 15h10M.5 4.500h10v7H.5zM14 1v2M14 6v9" strokeWidth="1.200" />
            </svg>
            <svg width="24" height="24" viewBox="0 0 24 24" className="absolute left-[398px] top-[8px]">
                <path d="M8 2h6l-3 18a3 3 0 0 1-3 2H4C1 15 3 4 8 2z" fill="#2a8ee0" />
                <path d="M14 2c5 0 7 10 6 16-1 3-3 4-6 4h-4l4-8z" fill="#e048a0" />
                <path d="M10 8h8l-6 14H6z" fill="#f0a040" fillOpacity="0.85" />
            </svg>
            <svg width="22" height="22" viewBox="0 0 22 22" className="absolute left-[449px] top-[9px]">
                <path d="M0 3h8l2 2h12v15H0z" fill="#f5c542" />
                <rect x="0" y="3" width="9" height="3" fill="#d9a520" />
                <rect x="8" y="15" width="7" height="5" fill="#2b7cd3" />
            </svg>
            <svg width="24" height="24" viewBox="0 0 24 24" className="absolute left-[496px] top-[8px]">
                <path d="M9 2h9l5 7v11H9z" fill="#28a8ea" />
                <rect x="1" y="6" width="14" height="14" rx="1.500" fill="#0f5fb0" />
                <circle cx="8" cy="13" r="3.500" fill="none" stroke="#fff" strokeWidth="1.800" />
            </svg>
            <svg width="24" height="26" viewBox="0 0 24 26" className="absolute left-[546px] top-[7px]">
                <circle cx="12" cy="14" r="11" fill="#ff7139" />
                <path d="M14 1c5 3 9 7 9 13H12z" fill="#ffbd4f" />
                <path d="M1 14a11 11 0 0 0 20 6z" fill="#e31587" />
                <circle cx="12" cy="14" r="4.500" fill="#7542e5" />
            </svg>
            <svg width="24" height="24" viewBox="0 0 24 24" className="absolute left-[595px] top-[8px]">
                <path d="M17 1l6 3v16l-6 3L7 14l-4 3-2-1V8l2-1 4 3zM17 7l-6 5 6 5z" fill="#1f8ad2" fillRule="evenodd" />
            </svg>
            <svg width="24" height="24" viewBox="0 0 24 24" className="absolute left-[644px] top-[8px]">
                <circle cx="12" cy="12" r="11" fill="#1a8fd0" />
                <path d="M2 9C5 1 20 0 23 11c0 4-5 5-8 3 2-5-6-8-9-3z" fill="#4ecb71" />
                <path d="M6 11c-2 6 3 12 9 11-5-2-6-7-3-10z" fill="#0c5a9e" />
            </svg>
            <div className="absolute left-[693px] top-[8px] w-[24px] h-[24px] rounded-[3px] bg-[#f5222d] flex items-center justify-center">
                <svg width="17" height="13" viewBox="0 0 17 13" fill="none" stroke="#fff" strokeWidth="2.400"><path d="M1 1l3.500 10L8.500 3l4 8L16 1" /></svg>
            </div>
            <svg width="30" height="28" viewBox="0 0 30 28" className="absolute left-[742px] top-[6px]">
                <circle cx="12" cy="13" r="12" fill="#d93a2f" />
                <path d="M12 13L2 19a12 12 0 0 0 14 5z" fill="#34a853" />
                <path d="M12 13l4 11a12 12 0 0 0 8-12z" fill="#fbbc05" />
                <circle cx="12" cy="13" r="5" fill="#4285f4" stroke="#fff" strokeWidth="1.500" />
                <circle cx="20" cy="20" r="8" fill="#c2185b" />
            </svg>
            <span className="absolute left-[759px] top-[18px] text-[8px] leading-[10px]">K</span>
            <svg width="26" height="26" viewBox="0 0 26 26" fill="none" className="absolute left-[790px] top-[7px]">
                <path d="M2 24l2-6.500a11 11 0 1 1 4.500 4.500z" stroke="#25d366" strokeWidth="2.200" />
                <path d="M9 8c-1 3 5 10 9 9l1-2.500-3-1.500-1 1c-1.500-.5-3-2.500-3.500-3.500l1-1L11 7z" fill="#25d366" />
            </svg>
            <div className="absolute left-[828px] top-0 w-[45px] h-[40px] bg-[#5c534b] flex items-center justify-center">
                <svg width="21" height="28" viewBox="0 0 21 28">
                    <rect x="0" y="15" width="8" height="13" fill="#f6e27a" />
                    <rect x="5" y="8" width="8" height="20" fill="#f2c811" />
                    <rect x="12" y="0" width="9" height="28" fill="#d39c0f" />
                </svg>
            </div>
            <div className="absolute left-[734px] bottom-0 w-[40px] h-[3px] bg-[#f0b8a8]" />
            <div className="absolute left-[783px] bottom-0 w-[40px] h-[3px] bg-[#f0b8a8]" />
            <div className="absolute left-[828px] bottom-0 w-[45px] h-[3px] bg-[#f0b8a8]" />
            <svg width="25" height="26" viewBox="0 0 25 26" className="absolute left-[1050px] top-[7px]">
                <path d="M6 24a5 5 0 0 1-1-10 7 7 0 0 1 13-2 6 6 0 0 1 2 12z" fill="#9fc5ee" />
                <circle cx="17" cy="7" r="6" fill="#c9302c" />
            </svg>
            <span className="absolute left-[1064px] top-[7px] text-[8px] leading-[12px] font-bold">2</span>
            <span className="absolute left-[1082px] top-[10px] text-[13.5px] leading-[20px] whitespace-nowrap">27°C</span>
            <span className="absolute left-[1120px] top-[10px] text-[13.5px] leading-[20px] whitespace-nowrap">Mostly cloudy</span>
            <ChevronUp size={18} strokeWidth={1.300} className="absolute left-[1228px] top-[11px]" />
            <div className="absolute left-[1250px] top-[2px] w-[60px] text-center text-[11.5px] leading-[19px]">9:54 AM<br />8/6/2025</div>
            <svg width="18" height="17" viewBox="0 0 18 17" className="absolute left-[1324px] top-[10px]">
                <path d="M0 0h17v13H5l-3 3v-3H0z" fill="#fff" />
                <path d="M3 4h11M3 7h11M3 10h7" stroke="#333" />
            </svg>
            <div className="absolute left-[1332px] top-[22px] w-[16px] h-[16px] rounded-full bg-[#333] border border-[#aaa] text-center text-[10px] leading-[14px] font-bold">2</div>
        </div>
    );
}

export default function App() {
    return (
        <div className={`w-[1366px] h-[768px] overflow-hidden flex flex-col bg-white ${ui}`}>
            <TitleBar />
            <Ribbon />
            <div className="flex h-[543px] shrink-0">
                <div className="w-[1005px] flex flex-col shrink-0">
                    <div className="h-[508px] flex bg-white shrink-0">
                        <Rail />
                        <div className="w-[13px] shrink-0" />
                        <Canvas />
                        <div className="w-[14px] border-r border-[#aaa] shrink-0" />
                        <FiltersPane />
                    </div>
                    <TabStrip />
                </div>
                <VizPane />
                <DataPane />
            </div>
            <StatusBar />
            <Taskbar />
        </div>
    );
}
